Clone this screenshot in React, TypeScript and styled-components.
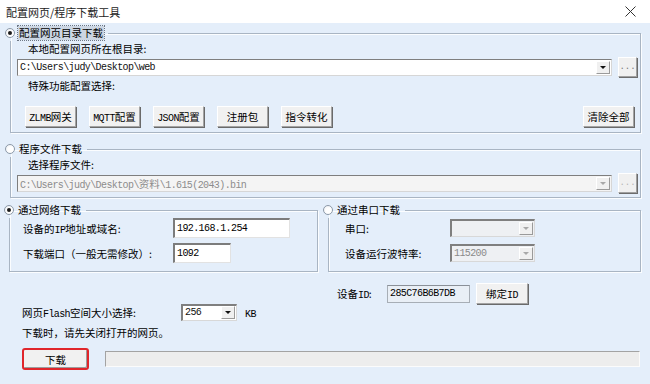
import styled, { createGlobalStyle } from 'styled-components';

const GlobalStyle = createGlobalStyle`
  html, body {
    margin: 0;
    padding: 0;
    background: #e4eefa;
  }
  * {
    box-sizing: border-box;
  }
`;

const Window = styled.div`
  width: 650px;
  height: 384px;
  overflow: hidden;
  background: #e4eefa;
  font-family: "Noto Sans CJK SC", sans-serif;
  font-size: 10.5px;
  color: #000;
  display: flex;
  flex-direction: column;
`;

const TitleBar = styled.div`
  height: 23px;
  flex-shrink: 0;
  background: #fff;
  display: flex;
  align-items: center;
  justify-content: space-between;
  padding: 0 14px 0 6px;
  font-size: 11px;
  color: #222;
`;

const Content = styled.div`
  display: flex;
  flex-direction: column;
  padding: 0 9px 0 10px;
`;

const Mono = styled.span`
  font-family: "Liberation Mono", "Noto Sans CJK SC", monospace;
  font-size: 10px;
  letter-spacing: -0.6px;
`;

const Group = styled.fieldset<{ $top?: number }>`
  margin: ${p => p.$top ?? 0}px 0 0 0;
  padding: 0;
  min-width: 0;
  border: 1px solid #a9b5c3;
  box-shadow: inset 1px 1px 0 #fbfdff, 1px 1px 0 #fbfdff;
`;

const Legend = styled.legend`
  display: flex;
  align-items: center;
  gap: 3px;
  height: 16px;
  margin-left: -6px;
  padding: 0 4px 0 0;
`;

const Radio = styled.span<{ $checked?: boolean }>`
  width: 10px;
  height: 10px;
  border-radius: 50%;
  border: 1px solid #8c99a8;
  background: radial-gradient(circle at 60% 60%, #ffffff 40%, #e6e9ee 100%);
  display: flex;
  align-items: center;
  justify-content: center;
  &::after {
    content: '';
    width: 4px;
    height: 4px;
    border-radius: 50%;
    background: ${p => (p.$checked ? '#1a1a1a' : 'transparent')};
  }
`;

const LegendText = styled.span<{ $focused?: boolean }>`
  line-height: 14px;
  padding: 0 1px;
  background: ${p => (p.$focused ? '#ccd6e3' : 'transparent')};
  outline: ${p => (p.$focused ? '1px dotted #6d7785' : 'none')};
`;

const GroupBody = styled.div<{ $pl: number; $pr: number; $pb: number }>`
  display: flex;
  flex-direction: column;
  padding: 0 ${p => p.$pr}px ${p => p.$pb}px ${p => p.$pl}px;
`;

const Caption = styled.div<{ $indent?: number; $top?: number }>`
  height: 16px;
  line-height: 16px;
  margin: ${p => p.$top ?? 0}px 0 0 ${p => p.$indent ?? 0}px;
  white-space: nowrap;
`;

const PathRow = styled.div`
  height: 20px;
  display: flex;
  align-items: center;
  gap: 6px;
`;

const Combo = styled.div<{ $disabled?: boolean }>`
  flex: 1;
  height: 17px;
  display: flex;
  align-items: center;
  justify-content: space-between;
  padding: 0 1px 0 2px;
  background: ${p => (p.$disabled ? '#f4f4f4' : '#fff')};
  color: ${p => (p.$disabled ? '#8c8c8c' : '#111')};
  border-top: 1px solid #7e7e7e;
  border-left: 1px solid #7e7e7e;
  border-right: 1px solid #d6d6d6;
  border-bottom: 1px solid #d6d6d6;
  white-space: nowrap;
`;

const DropButton = styled.span<{ $disabled?: boolean }>`
  width: 14px;
  height: 13px;
  flex-shrink: 0;
  display: flex;
  align-items: center;
  justify-content: center;
  background: #f0f0f0;
  border-top: 1px solid #fff;
  border-left: 1px solid #fff;
  border-right: 1px solid #9a9a9a;
  border-bottom: 1px solid #9a9a9a;
  &::after {
    content: '';
    border-left: 3px solid transparent;
    border-right: 3px solid transparent;
    border-top: 3px solid ${p => (p.$disabled ? '#a8a8a8' : '#111')};
  }
`;

const DotsButton = styled.button<{ $disabled?: boolean }>`
  width: 19px;
  height: 20px;
  padding: 0;
  flex-shrink: 0;
  font-family: "Liberation Mono", monospace;
  font-size: 9px;
  color: ${p => (p.$disabled ? '#b4b4b4' : '#7a7a7a')};
  background: #f0f0f0;
  border-top: 1px solid #fff;
  border-left: 1px solid #fff;
  border-right: 1px solid #a0a0a0;
  border-bottom: 1px solid #a0a0a0;
  box-shadow: 1px 1px 0 #6c6c6c;
`;

const ButtonRow = styled.div`
  display: flex;
  gap: 13px;
  margin-top: 12px;
  padding-left: 8px;
`;

const PushButton = styled.button<{ $w?: number }>`
  width: ${p => p.$w ?? 51}px;
  height: 21px;
  padding: 0;
  font-family: "Noto Sans CJK SC", sans-serif;
  font-size: 10.5px;
  color: #000;
  background: #f1f1f1;
  border-top: 1px solid #fff;
  border-left: 1px solid #fff;
  border-right: 1px solid #a3a3a3;
  border-bottom: 1px solid #a3a3a3;
  box-shadow: 1px 1px 0 #6a6a6a;
  white-space: nowrap;
`;

const ClearButton = styled(PushButton)`
  margin-left: auto;
  margin-right: 3px;
`;

const GroupRow = styled.div`
  display: flex;
  gap: 10px;
  margin-top: 4px;
  margin-left: -1px;
`;

const FormGrid = styled.div<{ $col: number }>`
  display: grid;
  grid-template-columns: ${p => p.$col}px auto;
  grid-auto-rows: 20px;
  row-gap: 5px;
  align-items: center;
`;

const Field = styled.div<{ $w: number; $h?: number }>`
  width: ${p => p.$w}px;
  height: ${p => p.$h ?? 20}px;
  display: flex;
  align-items: center;
  padding-left: 2px;
  background: #fff;
  border-top: 2px solid #7c7c7c;
  border-left: 2px solid #7c7c7c;
  border-right: 1px solid #e2e2e2;
  border-bottom: 1px solid #e2e2e2;
`;

const Select = styled.div<{ $w: number; $h?: number; $disabled?: boolean }>`
  width: ${p => p.$w}px;
  height: ${p => p.$h ?? 18}px;
  display: flex;
  align-items: center;
  justify-content: space-between;
  padding: 0 1px 0 2px;
  background: ${p => (p.$disabled ? '#eef0f3' : '#fff')};
  color: ${p => (p.$disabled ? '#8a8a8a' : '#111')};
  border-top: 2px solid #7f7f7f;
  border-left: 2px solid #7f7f7f;
  border-right: 1px solid #d8d8d8;
  border-bottom: 1px solid #d8d8d8;
`;

const IdRow = styled.div`
  display: flex;
  align-items: center;
  height: 21px;
  margin: 11px 0 0 327px;
`;

const IdLabel = styled.div`
  width: 50px;
  white-space: nowrap;
`;

const IdField = styled.div`
  width: 83px;
  height: 18px;
  display: flex;
  align-items: center;
  padding-left: 2px;
  margin-right: 6px;
  background: #e9eff6;
  border: 1px solid #a7aeb6;
  border-top-color: #8a9098;
`;

const FlashRow = styled.div`
  display: flex;
  align-items: center;
  height: 16px;
  padding-left: 12px;
`;

const FlashLabel = styled.div`
  width: 159px;
  white-space: nowrap;
`;

const Unit = styled.span`
  margin-left: 8px;
`;

const Note = styled.div`
  height: 16px;
  line-height: 16px;
  margin-top: 5px;
  padding-left: 12px;
`;

const DownloadRow = styled.div`
  display: flex;
  align-items: center;
  height: 22px;
  margin-top: 7px;
  padding-left: 12px;
`;

const DownloadButton = styled.button`
  width: 67px;
  height: 22px;
  padding: 0;
  font-family: "Noto Sans CJK SC", sans-serif;
  font-size: 10.5px;
  color: #000;
  background: #f1f1f1;
  border: 2px solid #e0262b;
  border-radius: 3px;
  box-shadow: inset -1px -1px 0 #9c9c9c;
`;

const Progress = styled.div`
  flex: 1;
  height: 16px;
  margin: 0 1px 0 16px;
  background: #ededed;
  border-top: 1px solid #a3a3a3;
  border-left: 1px solid #a3a3a3;
  border-right: 1px solid #fbfbfb;
  border-bottom: 1px solid #fbfbfb;
`;

const CloseIcon = () => (
  <svg width="11" height="11" viewBox="0 0 11 11">
    <path d="M0.5 0.5 L10.5 10.5 M10.5 0.5 L0.5 10.5" stroke="#333" strokeWidth="1" />
  </svg>
);

export default function App() {
  return (
    <Window>
      <GlobalStyle />
      <TitleBar>
        <span>配置网页/程序下载工具</span>
        <CloseIcon />
      </TitleBar>
      <Content>
        <Group $top={2}>
          <Legend>
            <Radio $checked />
            <LegendText $focused>配置网页目录下载</LegendText>
          </Legend>
          <GroupBody $pl={6} $pr={3} $pb={5}>
            <Caption $indent={11}>本地配置网页所在根目录:</Caption>
            <PathRow>
              <Combo>
                <Mono>C:\Users\judy\Desktop\web</Mono>
                <DropButton />
              </Combo>
              <DotsButton>...</DotsButton>
            </PathRow>
            <Caption $indent={11} $top={1}>特殊功能配置选择:</Caption>
            <ButtonRow>
              <PushButton><Mono>ZLMB</Mono>网关</PushButton>
              <PushButton><Mono>MQTT</Mono>配置</PushButton>
              <PushButton><Mono>JSON</Mono>配置</PushButton>
              <PushButton>注册包</PushButton>
              <PushButton>指令转化</PushButton>
              <ClearButton>清除全部</ClearButton>
            </ButtonRow>
          </GroupBody>
        </Group>

        <Group $top={8}>
          <Legend>
            <Radio />
            <LegendText>程序文件下载</LegendText>
          </Legend>
          <GroupBody $pl={6} $pr={3} $pb={4}>
            <Caption $indent={11}>选择程序文件:</Caption>
            <PathRow>
              <Combo $disabled>
                <span>
                  <Mono>C:\Users\judy\Desktop\</Mono>资料<Mono>\1.615(2043).bin</Mono>
                </span>
                <DropButton $disabled />
              </Combo>
              <DotsButton $disabled>...</DotsButton>
            </PathRow>
          </GroupBody>
        </Group>

        <GroupRow>
          <Group style={{ width: 309 }}>
            <Legend>
              <Radio $checked />
              <LegendText>通过网络下载</LegendText>
            </Legend>
            <GroupBody $pl={13} $pr={0} $pb={8}>
              <FormGrid $col={150}>
                <span>设备的<Mono>IP</Mono>地址或域名:</span>
                <Field $w={117}><Mono>192.168.1.254</Mono></Field>
                <span>下载端口（一般无需修改）:</span>
                <Field $w={58}><Mono>1092</Mono></Field>
              </FormGrid>
            </GroupBody>
          </Group>
          <Group style={{ flex: 1 }}>
            <Legend>
              <Radio />
              <LegendText>通过串口下载</LegendText>
            </Legend>
            <GroupBody $pl={16} $pr={0} $pb={8}>
              <FormGrid $col={105}>
                <span>串口:</span>
                <Select $w={85} $disabled>
                  <span />
                  <DropButton $disabled />
                </Select>
                <span>设备运行波特率:</span>
                <Select $w={85} $disabled>
                  <Mono>115200</Mono>
                  <DropButton $disabled />
                </Select>
              </FormGrid>
            </GroupBody>
          </Group>
        </GroupRow>

        <IdRow>
          <IdLabel>设备<Mono>ID</Mono>:</IdLabel>
          <IdField><Mono>285C76B6B7DB</Mono></IdField>
          <PushButton $w={52}>绑定<Mono>ID</Mono></PushButton>
        </IdRow>
        <FlashRow>
          <FlashLabel>网页<Mono>Flash</Mono>空间大小选择:</FlashLabel>
          <Select $w={56} $h={17}>
            <Mono>256</Mono>
            <DropButton />
          </Select>
          <Unit><Mono>KB</Mono></Unit>
        </FlashRow>
        <Note>下载时，请先关闭打开的网页。</Note>
        <DownloadRow>
          <DownloadButton>下载</DownloadButton>
          <Progress />
        </DownloadRow>
      </Content>
    </Window>
  );
}
